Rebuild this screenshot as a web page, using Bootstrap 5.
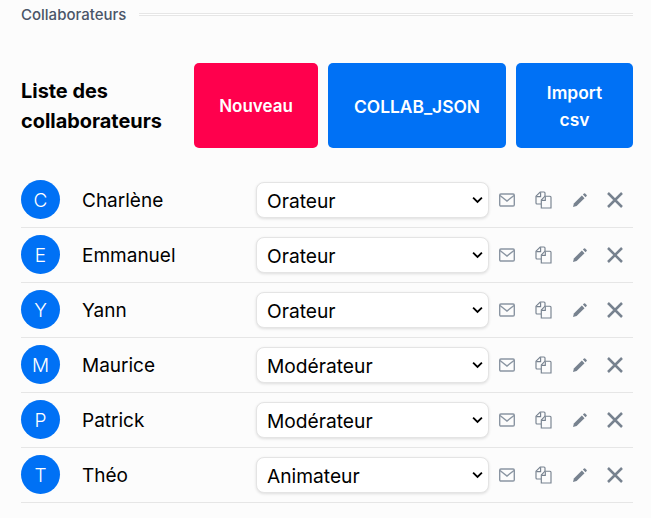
<!DOCTYPE html>
<html lang="fr">
<head>
  <meta charset="UTF-8">
  <title>Collaborateurs</title>
  <link href="https://cdn.jsdelivr.net/npm/bootstrap@5.3.2/dist/css/bootstrap.min.css" rel="stylesheet">
  <style>
    body { background: #fcfcfc; font-family: Inter, "Liberation Sans", sans-serif; color: #000; }
    .page-wrap { padding: 7px 18px 0 21px; }
    .sec-title { font-size: 15px; font-weight: 500; color: #4a5568; line-height: 16px; }
    .sec-line { height: 3px; background: #fff; border-top: 1px solid #e6e6e6; border-bottom: 1px solid #e6e6e6; margin-left: 13px; margin-top: -1px; }
    .head-row { margin-top: 40px; margin-bottom: 25px; height: 85px; }
    .head-btns { gap: 10px; }
    .list-title { font-size: 19.9px; font-weight: 700; line-height: 30px; width: 173px; flex-shrink: 0; }
    .big-btn { font-size: 17.4px; font-weight: 600; line-height: 27px; color: #fff; border: 0; border-radius: 5px; padding: 1px 0 0; display: flex; align-items: center; justify-content: center; text-align: center; }
    .btn-new { width: 124px; background: #ff004d; font-size: 17px; }
    .btn-json { width: 178px; background: #0071f5; }
    .btn-csv { width: 117px; background: #0071f5; }
    .big-btn:hover { color: #fff; }
    .collab-row { height: 55px; border-bottom: 1px solid #e6e6e6; padding-bottom: 1px; }
    .avatar-dot { width: 39px; height: 39px; border-radius: 50%; background: #0071f5; color: #fff; font-size: 19px; font-weight: 300; flex-shrink: 0; padding-top: 3px; }
    .collab-name { width: 174px; margin-left: 22px; font-size: 19px; flex-shrink: 0; margin-top: 3px; margin-bottom: 0; }
    .role-select { width: 233px; height: 36px; flex-shrink: 0; font-size: 19.2px; padding: 3px 30px 0 10px; border: 1px solid #e4e4e4; border-radius: 8px; box-shadow: 0 1px 3px rgba(0,0,0,.12); color: #000;
      background-image: url("data:image/svg+xml,%3csvg xmlns='http://www.w3.org/2000/svg' viewBox='0 0 12 8'%3e%3cpath fill='none' stroke='%23000' stroke-width='2' d='M1.2 1.5 6 6.2l4.8-4.7'/%3e%3c/svg%3e");
      background-size: 11px 8px; background-position: right 5px center; }
    .tool-icons { margin-left: 10px; width: 134px; color: #77828f; padding-right: 10px; }
    .tool-icons svg { display: block; flex-shrink: 0; }
    .ico-mail { color: #8a95a2; }
  </style>
</head>
<body>
  <div class="page-wrap">
    <div class="d-flex align-items-center">
      <div class="sec-title">Collaborateurs</div>
      <div class="sec-line flex-grow-1"></div>
    </div>

    <div class="head-row d-flex">
      <div class="list-title align-self-center">Liste des collaborateurs</div>
      <div class="d-flex flex-grow-1 head-btns">
        <button class="btn big-btn btn-new">Nouveau</button>
        <button class="btn big-btn btn-json">COLLAB_JSON</button>
        <button class="btn big-btn btn-csv">Import<br>csv</button>
      </div>
    </div>

    <div id="collab-list"></div>
  </div>

  <script>
    const collabs = [
      ['Charlène', 'Orateur'],
      ['Emmanuel', 'Orateur'],
      ['Yann', 'Orateur'],
      ['Maurice', 'Modérateur'],
      ['Patrick', 'Modérateur'],
      ['Théo', 'Animateur']
    ];
    const icons = `
      <svg class="ico-mail" width="16" height="14" viewBox="0 0 16 14" fill="none" stroke="currentColor" stroke-width="1.4"><rect x=".7" y="1" width="14.6" height="12" rx="1.2"/><path d="M1 2.5 8 8l7-5.5"/></svg>
      <svg width="17" height="18" viewBox="0 0 17 18" fill="none" stroke="currentColor" stroke-width="1.15"><path d="M6 13H2a1 1 0 0 1-1-1V5.2L5.2 1H9a1 1 0 0 1 1 1v3"/><path d="M1.3 5.6h4.3V1.3"/><path d="M6.3 17V9l3.6-3.8H15a1 1 0 0 1 1 1V17z"/><path d="M6.6 9.4h3.7V5.5"/></svg>
      <svg width="14" height="14" viewBox="0 0 14 14" fill="currentColor"><path d="M0 14l.9-3.6L8.9 2.6l2.6 2.6-7.9 7.9z"/><path d="M9.9 1.6 11 .5a.8.8 0 0 1 1.1 0l1.5 1.5a.8.8 0 0 1 0 1.1l-1.1 1.1z"/></svg>
      <svg width="16" height="16" viewBox="0 0 16 16" fill="none" stroke="currentColor" stroke-width="2.5"><path d="M1 1l14 14M15 1 1 15"/></svg>`;
    const list = document.getElementById('collab-list');

    collabs.forEach(c => {
      const row = document.createElement('div');
      row.className = 'collab-row d-flex align-items-center';

      const dot = document.createElement('div');
      dot.className = 'avatar-dot d-flex align-items-center justify-content-center';
      dot.textContent = c[0][0];

      const name = document.createElement('div');
      name.className = 'collab-name';
      name.textContent = c[0];

      const sel = document.createElement('select');
      sel.className = 'form-select role-select';
      ['Orateur', 'Modérateur', 'Animateur'].forEach(r => {
        const opt = document.createElement('option');
        opt.textContent = r;
        opt.selected = r === c[1];
        sel.appendChild(opt);
      });

      const tools = document.createElement('div');
      tools.className = 'tool-icons d-flex align-items-center justify-content-between';
      tools.innerHTML = icons;

      row.append(dot, name, sel, tools);
      list.appendChild(row);
    });
  </script>
</body>
</html>
